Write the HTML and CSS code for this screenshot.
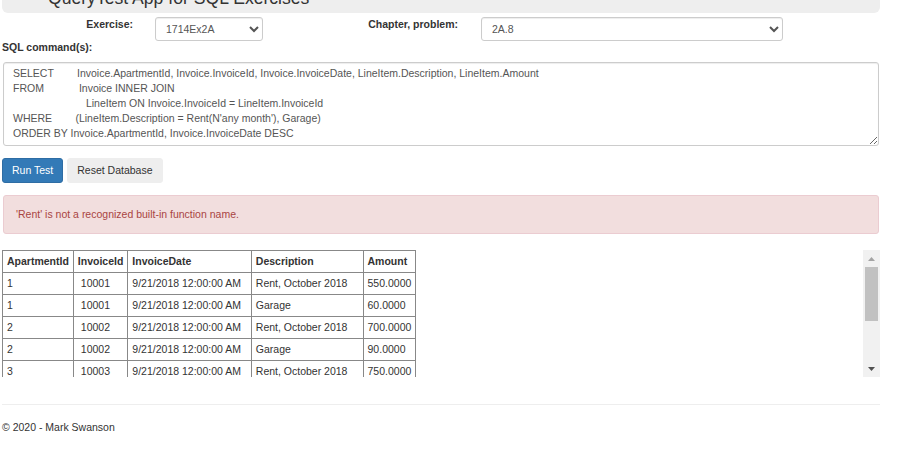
FILE: index.html
```html
<!DOCTYPE html>
<html lang="en">
<head>
<meta charset="utf-8">
<title>QueryTest App for SQL Exercises</title>
<link rel="stylesheet" href="styles.css">
</head>
<body>
<div class="page">
  <div class="jumbotron"><h1 class="title">QueryTest App for SQL Exercises</h1></div>

  <div class="form-row">
    <label class="lbl lbl-ex">Exercise:</label>
    <select class="ctl sel-ex"><option>1714Ex2A</option></select>
    <label class="lbl lbl-ch">Chapter, problem:</label>
    <select class="ctl sel-ch"><option>2A.8</option></select>
  </div>

  <div class="sql-label">SQL command(s):</div>
  <textarea class="sql" spellcheck="false">SELECT        Invoice.ApartmentId, Invoice.InvoiceId, Invoice.InvoiceDate, LineItem.Description, LineItem.Amount
FROM            Invoice INNER JOIN
                         LineItem ON Invoice.InvoiceId = LineItem.InvoiceId
WHERE        (LineItem.Description = Rent(N'any month'), Garage)
ORDER BY Invoice.ApartmentId, Invoice.InvoiceDate DESC</textarea>

  <div class="buttons">
    <button class="btn btn-primary">Run Test</button>
    <button class="btn btn-default">Reset Database</button>
  </div>

  <div class="alert">'Rent' is not a recognized built-in function name.</div>

  <div class="results">
    <div class="results-view">
      <table class="grid">
        <tr><th>ApartmentId</th><th>InvoiceId</th><th>InvoiceDate</th><th>Description</th><th>Amount</th></tr>
        <tr><td>1</td><td class="id">10001</td><td>9/21/2018 12:00:00 AM</td><td>Rent, October 2018</td><td>550.0000</td></tr>
        <tr><td>1</td><td class="id">10001</td><td>9/21/2018 12:00:00 AM</td><td>Garage</td><td>60.0000</td></tr>
        <tr><td>2</td><td class="id">10002</td><td>9/21/2018 12:00:00 AM</td><td>Rent, October 2018</td><td>700.0000</td></tr>
        <tr><td>2</td><td class="id">10002</td><td>9/21/2018 12:00:00 AM</td><td>Garage</td><td>90.0000</td></tr>
        <tr><td>3</td><td class="id">10003</td><td>9/21/2018 12:00:00 AM</td><td>Rent, October 2018</td><td>750.0000</td></tr>
        <tr><td>3</td><td class="id">10003</td><td>9/21/2018 12:00:00 AM</td><td>Garage</td><td>60.0000</td></tr>
        <tr><td>4</td><td class="id">10004</td><td>10/21/2018 12:00:00 AM</td><td>Rent, November 2018</td><td>650.0000</td></tr>
        <tr><td>4</td><td class="id">10004</td><td>10/21/2018 12:00:00 AM</td><td>Garage</td><td>60.0000</td></tr>
        <tr><td>5</td><td class="id">10005</td><td>10/21/2018 12:00:00 AM</td><td>Rent, November 2018</td><td>800.0000</td></tr>
      </table>
    </div>
    <div class="vscroll" aria-hidden="true">
      <div class="vs-btn">
        <svg width="7" height="4" viewBox="0 0 7 4"><polygon points="0,4 3.5,0 7,4" fill="#a3a3a3"/></svg>
      </div>
      <div class="vs-thumb"></div>
      <div class="vs-track"></div>
      <div class="vs-btn vs-btn-down">
        <svg width="7" height="4" viewBox="0 0 7 4"><polygon points="0,0 7,0 3.5,4" fill="#505050"/></svg>
      </div>
    </div>
  </div>

  <hr class="rule">
  <footer class="footer">&copy; 2020 - Mark Swanson</footer>
</div>
</body>
</html>
```

FILE: styles.css
```css
html, body {
  margin: 0;
  padding: 0;
  background: #fff;
}

body {
  font-family: "Liberation Sans", Arial, sans-serif;
  font-size: 10.5px;
  line-height: 15px;
  color: #333;
  overflow: hidden;
}

.page {
  width: 878px;
  padding-left: 2px;
  display: flex;
  flex-direction: column;
}

.jumbotron {
  margin-top: -12px;
  padding: 0 46px 5px;
  background: #eee;
  border-radius: 0 0 6px 6px;
}

.title {
  margin: 0;
  font-size: 17.6px;
  line-height: 20px;
  font-weight: normal;
  color: #333;
}

.form-row {
  margin-top: 4px;
  display: flex;
  align-items: flex-start;
  height: 24px;
}

.lbl {
  font-weight: bold;
  text-align: right;
  line-height: 15px;
  padding-top: 0;
}

.lbl-ex { width: 131px; }
.lbl-ch { width: 195px; }

.ctl {
  box-sizing: border-box;
  height: 24px;
  font-family: "Liberation Sans", Arial, sans-serif;
  font-size: 10.5px;
  color: #555;
  background-color: #fff;
  border: 1px solid #ccc;
  border-radius: 3px;
  box-shadow: inset 0 1px 1px rgba(0, 0, 0, 0.075);
  padding: 0 6px 0 6px;
}

.sel-ex { width: 108px; margin-left: 22px; }
.sel-ch { width: 302px; margin-left: 23px; }

.sql-label {
  margin-top: -1px;
  font-weight: bold;
  line-height: 15px;
}

.sql {
  margin: 7px 0 0 1px;
  box-sizing: border-box;
  width: 876px;
  height: 84px;
  padding: 3px 9px;
  font-family: "Liberation Sans", Arial, sans-serif;
  font-size: 10.5px;
  line-height: 15px;
  color: #555;
  border: 1px solid #ccc;
  border-radius: 3px;
  box-shadow: inset 0 1px 1px rgba(0, 0, 0, 0.075);
  resize: vertical;
  white-space: pre;
  overflow: hidden;
}

.buttons {
  margin-top: 12px;
  display: flex;
  gap: 4px;
}

.btn {
  box-sizing: border-box;
  height: 25px;
  padding: 4px 9px;
  font-family: "Liberation Sans", Arial, sans-serif;
  font-size: 10.5px;
  line-height: 15px;
  border-radius: 3px;
  border: 1px solid transparent;
  cursor: pointer;
}

.btn-primary {
  background: #337ab7;
  border-color: #2e6da4;
  color: #fff;
}

.btn-default {
  background: #eee;
  border-color: #eee;
  color: #333;
}

.alert {
  margin: 12px 0 0 1px;
  width: 876px;
  box-sizing: border-box;
  padding: 11px 12px;
  background: #f2dede;
  border: 1px solid #ebccd1;
  border-radius: 3px;
  color: #a94442;
}

.results {
  margin-top: 16px;
  height: 127px;
  width: 878px;
  display: flex;
}

.results-view {
  flex: 1;
  overflow: hidden;
}

.vscroll {
  width: 17px;
  flex: none;
  display: flex;
  flex-direction: column;
  background: #f1f1f1;
}

.vs-btn {
  height: 17px;
  flex: none;
  display: flex;
  align-items: center;
  justify-content: center;
}

.vs-btn svg { display: block; }

.vs-thumb {
  height: 54px;
  flex: none;
  margin: 0 2px;
  background: #c1c1c1;
}

.vs-track { flex: 1; }

.grid {
  border-collapse: collapse;
}

.grid th,
.grid td {
  border: 1px solid #888;
  padding: 3px 4px;
  text-align: left;
  white-space: nowrap;
  line-height: 15px;
}

.grid th { font-weight: bold; }

.grid td.id { padding-left: 7px; }

.rule {
  margin: 27px 0 0;
  border: 0;
  border-top: 1px solid #eee;
  height: 0;
}

.footer {
  margin-top: 15px;
  line-height: 15px;
}
```
